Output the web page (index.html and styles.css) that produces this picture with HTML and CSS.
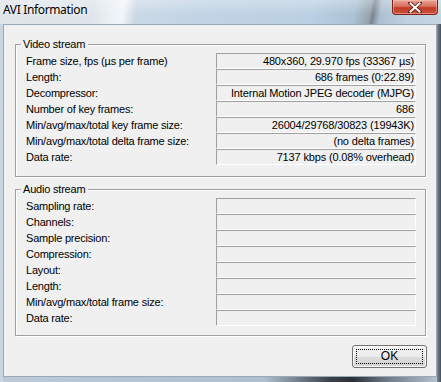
FILE: index.html
```html
<!DOCTYPE html>
<html>
<head>
<meta charset="utf-8">
<title>AVI Information</title>
<link rel="stylesheet" href="styles.css">
</head>
<body>
<div class="window">
  <div class="titlebar">
    <span class="title">AVI Information</span>
    <div class="close">
      <svg width="14" height="11" viewBox="0 0 14 11">
        <path d="M2 1 L12 10 M12 1 L2 10" stroke="#5a1a12" stroke-width="3.6" stroke-linecap="square" fill="none"/>
        <path d="M2.5 1.5 L11.5 9.5 M11.5 1.5 L2.5 9.5" stroke="#ffffff" stroke-width="2" stroke-linecap="square" fill="none"/>
      </svg>
    </div>
  </div>
  <div class="client">
    <div class="group video">
      <span class="caption">Video stream</span>
      <div class="rows">
        <div class="label">Frame size, fps (µs per frame)</div><div class="value">480x360, 29.970 fps (33367 µs)</div>
        <div class="label">Length:</div><div class="value">686 frames (0:22.89)</div>
        <div class="label">Decompressor:</div><div class="value">Internal Motion JPEG decoder (MJPG)</div>
        <div class="label">Number of key frames:</div><div class="value">686</div>
        <div class="label">Min/avg/max/total key frame size:</div><div class="value">26004/29768/30823 (19943K)</div>
        <div class="label">Min/avg/max/total delta frame size:</div><div class="value">(no delta frames)</div>
        <div class="label">Data rate:</div><div class="value">7137 kbps (0.08% overhead)</div>
      </div>
    </div>
    <div class="group audio">
      <span class="caption">Audio stream</span>
      <div class="rows">
        <div class="label">Sampling rate:</div><div class="value"></div>
        <div class="label">Channels:</div><div class="value"></div>
        <div class="label">Sample precision:</div><div class="value"></div>
        <div class="label">Compression:</div><div class="value"></div>
        <div class="label">Layout:</div><div class="value"></div>
        <div class="label">Length:</div><div class="value"></div>
        <div class="label">Min/avg/max/total frame size:</div><div class="value"></div>
        <div class="label">Data rate:</div><div class="value"></div>
      </div>
    </div>
    <div class="actions">
      <button class="ok"><span class="focus">OK</span></button>
    </div>
  </div>
</div>
</body>
</html>
```
FILE: styles.css
```css
html, body {
  margin: 0;
  padding: 0;
}
body {
  width: 441px;
  height: 382px;
  overflow: hidden;
  font-family: "Liberation Sans", Arial, sans-serif;
  font-size: 11px;
  color: #000;
}
.window {
  width: 441px;
  height: 382px;
  display: flex;
  flex-direction: column;
  background:
    linear-gradient(to right, #c9d6e2 0, #c9d6e2 3px, transparent 3px, transparent 437px, #7d8a97 437px, #454e58 441px),
    linear-gradient(to right, #bccad8 0%, #aebfcf 60%, #3a4048 75%, #2c3036 80%, #6e7c8a 88%, #b9c7d4 100%);
}
.titlebar {
  height: 24px;
  display: flex;
  align-items: flex-start;
  justify-content: space-between;
  background:
    linear-gradient(to bottom, rgba(255,255,255,0.3) 0%, rgba(255,255,255,0) 60%),
    linear-gradient(100deg, #e0e5ea 0%, #dee4e9 21%, #eaeff3 25%, #f3f6f8 28%, #cbd9e6 31%, #c1d4e5 45%, #bbd0e2 70%, #adc2d5 80%, #97a5b2 83.5%, #7a8590 84.3%, #adc0d1 86%, #bfd0e0 92%, #c6d5e2 100%);
}
.title {
  font-family: "Noto Sans", "Open Sans", sans-serif;
  font-size: 12px;
  letter-spacing: -0.35px;
  line-height: 16px;
  padding: 2px 0 0 3px;
  color: #000;
  text-shadow: 0 0 6px rgba(255,255,255,0.9);
}
.close {
  width: 44px;
  height: 14px;
  margin-right: 3px;
  border: 1px solid #7a2318;
  border-top: none;
  border-radius: 0 0 4px 4px;
  background: linear-gradient(to bottom, #e8a596 0%, #d8705e 45%, #c23b27 55%, #c9503a 100%);
  box-shadow: inset 0 0 0 1px rgba(255,200,190,0.5);
  display: flex;
  align-items: center;
  justify-content: center;
}
.close svg {
  display: block;
}
.client {
  margin: 0 4px 5px 3px;
  height: 353px;
  box-sizing: border-box;
  background: #f0f0f0;
  border: 1px solid #9aa9b8;
  display: flex;
  flex-direction: column;
  align-items: flex-start;
  padding: 19px 0 0 11px;
}
.group {
  position: relative;
  box-sizing: border-box;
  width: 411px;
  border: 1px solid #a0a0a0;
  box-shadow: 1px 1px 0 #fff, inset 1px 1px 0 #fff;
  padding: 8px 0 0 10px;
}
.group.video {
  height: 133px;
}
.group.audio {
  height: 147px;
  margin-top: 12px;
}
.caption {
  position: absolute;
  left: 5px;
  top: -8px;
  padding: 0 3px 0 2px;
  background: #f0f0f0;
  line-height: 14px;
  letter-spacing: -0.2px;
}
.rows {
  display: grid;
  grid-template-columns: 190px 200px;
  grid-auto-rows: 16px;
}
.label {
  line-height: 16px;
  white-space: nowrap;
  letter-spacing: -0.2px;
}
.value {
  box-sizing: border-box;
  height: 16px;
  border-top: 1px solid #a0a0a0;
  border-left: 1px solid #a0a0a0;
  border-bottom: 1px solid #fff;
  border-right: 1px solid #fff;
  text-align: right;
  padding-right: 1px;
  line-height: 14px;
  white-space: nowrap;
  letter-spacing: -0.15px;
}
.actions {
  width: 412px;
  display: flex;
  justify-content: flex-end;
  margin-top: 9px;
}
.ok {
  box-sizing: border-box;
  width: 75px;
  height: 23px;
  margin: 0;
  padding: 3px;
  border: 1px solid #707070;
  border-radius: 3px;
  background: linear-gradient(to bottom, #f2f2f2 0%, #ebebeb 50%, #dddddd 51%, #d3d3d3 100%);
  box-shadow: inset 0 0 0 1px #fbfbfb;
  font-family: "Liberation Sans", Arial, sans-serif;
  font-size: 12px;
  color: #000;
  display: flex;
}
.focus {
  flex: 1;
  border: 1px dotted #000;
  line-height: 13px;
  text-align: center;
}
```
